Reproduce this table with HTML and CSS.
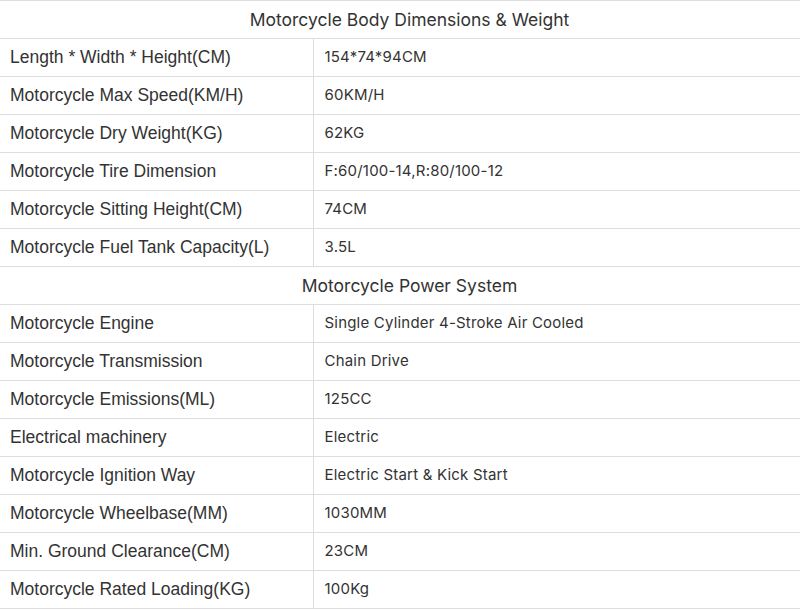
FILE: index.html
```html
<!DOCTYPE html>
<html>
<head>
<meta charset="utf-8">
<link rel="stylesheet" href="styles.css">
</head>
<body>
<table class="specs">
  <colgroup><col class="col-label"><col class="col-value"></colgroup>
  <tr><th colspan="2" class="section">Motorcycle Body Dimensions &amp; Weight</th></tr>
  <tr><td class="label">Length * Width * Height(CM)</td><td class="value">154*74*94CM</td></tr>
  <tr><td class="label">Motorcycle Max Speed(KM/H)</td><td class="value">60KM/H</td></tr>
  <tr><td class="label">Motorcycle Dry Weight(KG)</td><td class="value">62KG</td></tr>
  <tr><td class="label">Motorcycle Tire Dimension</td><td class="value">F:60/100-14,R:80/100-12</td></tr>
  <tr><td class="label">Motorcycle Sitting Height(CM)</td><td class="value">74CM</td></tr>
  <tr><td class="label">Motorcycle Fuel Tank Capacity(L)</td><td class="value">3.5L</td></tr>
  <tr><th colspan="2" class="section">Motorcycle Power System</th></tr>
  <tr><td class="label">Motorcycle Engine</td><td class="value">Single Cylinder 4-Stroke Air Cooled</td></tr>
  <tr><td class="label">Motorcycle Transmission</td><td class="value">Chain Drive</td></tr>
  <tr><td class="label">Motorcycle Emissions(ML)</td><td class="value">125CC</td></tr>
  <tr><td class="label">Electrical machinery</td><td class="value">Electric</td></tr>
  <tr><td class="label">Motorcycle Ignition Way</td><td class="value">Electric Start &amp; Kick Start</td></tr>
  <tr><td class="label">Motorcycle Wheelbase(MM)</td><td class="value">1030MM</td></tr>
  <tr><td class="label">Min. Ground Clearance(CM)</td><td class="value">23CM</td></tr>
  <tr><td class="label">Motorcycle Rated Loading(KG)</td><td class="value">100Kg</td></tr>
</table>
</body>
</html>
```
FILE: styles.css
```css
html, body {
  margin: 0;
  padding: 0;
  background: #ffffff;
  overflow: hidden;
}
.specs {
  width: 819px;
  border-collapse: collapse;
  table-layout: fixed;
  color: #333333;
}
.col-label {
  width: 313px;
}
.specs tr {
  height: 38px;
}
.specs th, .specs td {
  border-top: 1px solid #dddddd;
  border-bottom: 1px solid #dddddd;
  padding: 0;
  vertical-align: middle;
  white-space: nowrap;
}
.specs .section {
  font-family: Inter, "Liberation Sans", sans-serif;
  font-weight: 400;
  font-size: 17.5px;
  text-align: center;
}
.specs .label {
  padding-left: 10px;
  font-family: "Liberation Sans", Arial, sans-serif;
  font-size: 17.5px;
  border-right: 1px solid #dddddd;
}
.specs .value {
  padding-left: 11px;
  padding-bottom: 2px;
  font-family: Inter, "Liberation Sans", sans-serif;
  font-size: 15px;
  letter-spacing: 0.2px;
}
```
